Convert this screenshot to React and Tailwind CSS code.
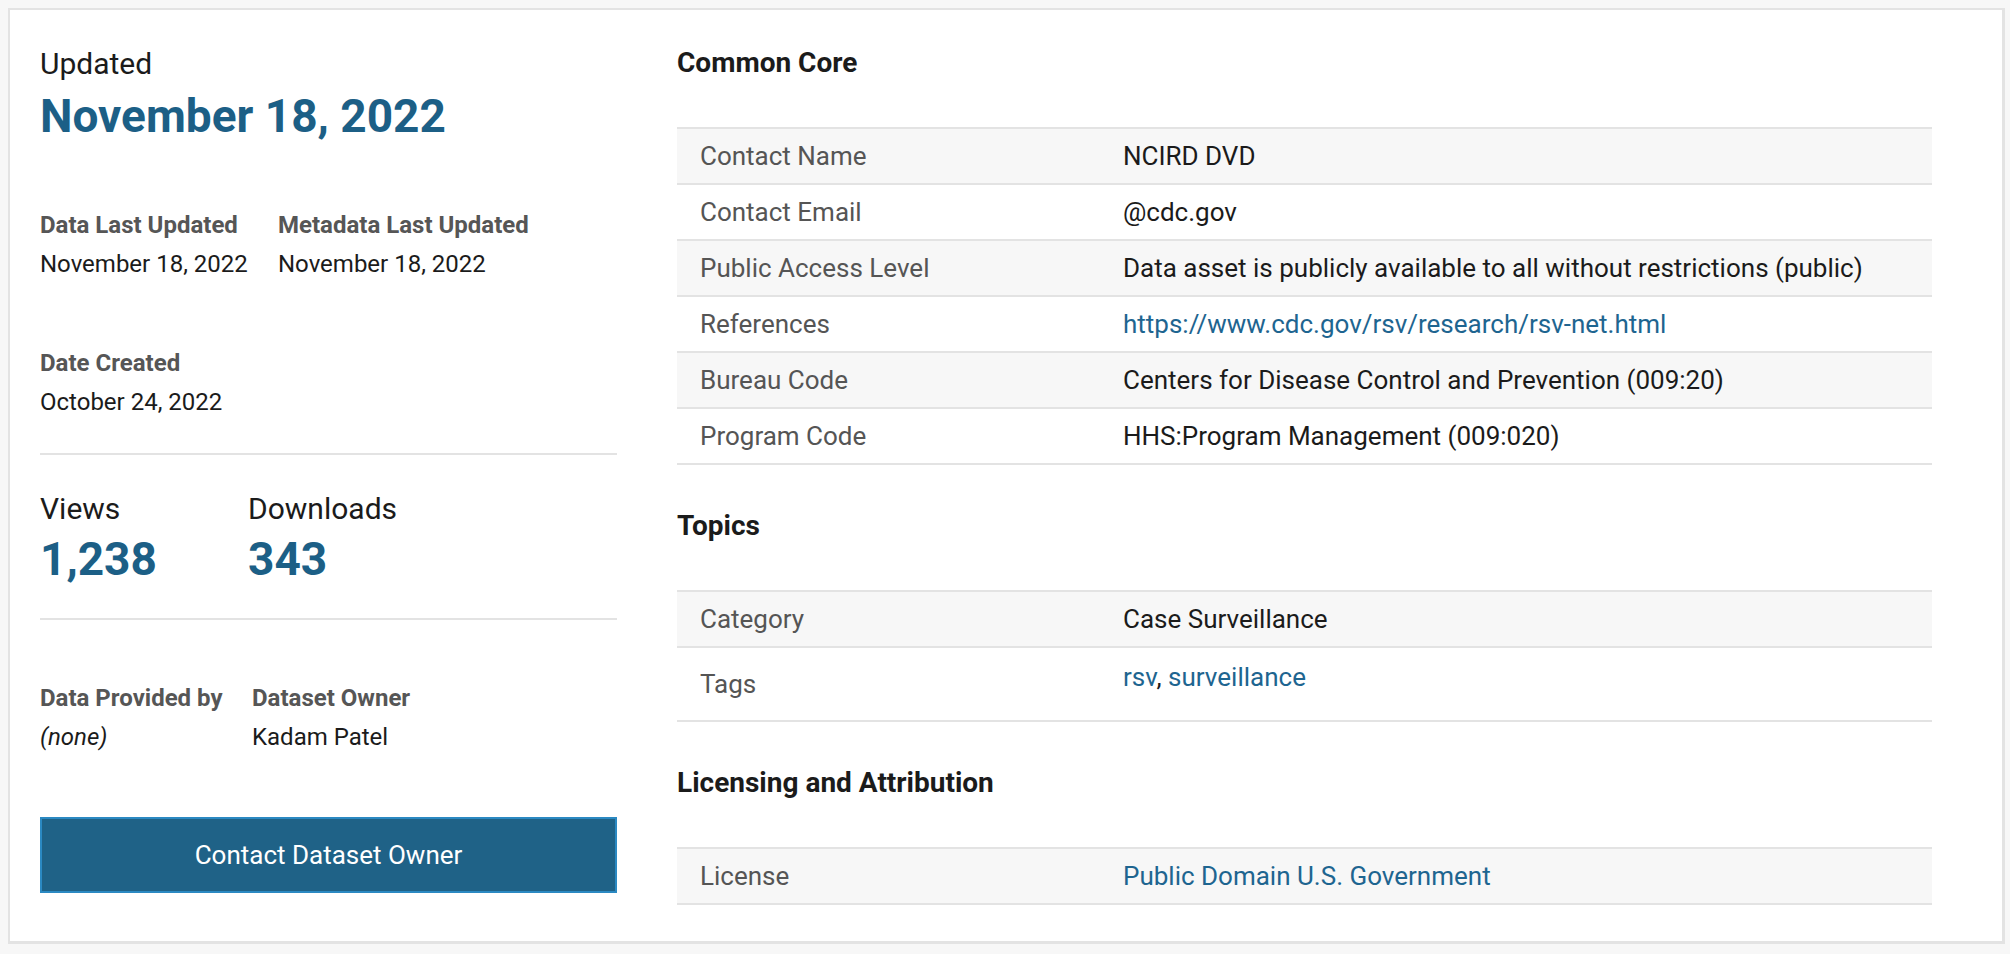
import React from "react";

const blue = "text-[#1c5f86]";

const commonCore = [
  { label: "Contact Name", value: "NCIRD DVD" },
  { label: "Contact Email", value: "@cdc.gov" },
  {
    label: "Public Access Level",
    value: "Data asset is publicly available to all without restrictions (public)",
  },
  {
    label: "References",
    value: "https://www.cdc.gov/rsv/research/rsv-net.html",
    link: true,
  },
  { label: "Bureau Code", value: "Centers for Disease Control and Prevention (009:20)" },
  { label: "Program Code", value: "HHS:Program Management (009:020)" },
];

const Row = ({ label, children, striped, tall }) => (
  <div
    className={`flex border-b-2 border-[#e3e3e3] ${striped ? "bg-[#f7f7f7]" : "bg-white"} ${
      tall ? "items-start" : "items-center h-[56px]"
    }`}
  >
    <div
      className={`w-[446px] shrink-0 pl-[23px] text-[#555555] leading-[36px] ${
        tall ? "self-center" : ""
      }`}
    >
      {label}
    </div>
    <div className={`text-[#1b1b1b] leading-[36px] ${tall ? "pt-[11px] pb-[25px]" : ""}`}>
      {children}
    </div>
  </div>
);

const Section = ({ title, first, children }) => (
  <div className={first ? "" : "mt-[44px]"}>
    <h2 className="text-[28px] leading-[34px] font-bold text-[#1b1b1b]">{title}</h2>
    <div className="mt-[47px] border-t-2 border-[#e3e3e3] text-[26px]">{children}</div>
  </div>
);

const Field = ({ label, value, width, italic }) => (
  <div className={width}>
    <div className="text-[24px] leading-[36px] font-bold text-[#565656]">{label}</div>
    <div className={`mt-[3px] text-[24px] leading-[36px] text-[#1b1b1b] ${italic ? "italic" : ""}`}>
      {value}
    </div>
  </div>
);

export default function App() {
  return (
    <div className="min-h-screen bg-[#f7f7f7] pt-[8px] pl-[8px] font-['Roboto',sans-serif]">
      <div className="w-[1997px] bg-white border-l-2 border-t-2 border-r-[3px] border-b-[3px] border-[#e3e3e3]">
        <div className="flex items-start pl-[30px] pt-[36px] pb-[36px]">
          {/* left column */}
          <div className="w-[577px] shrink-0">
            <div className="text-[30px] leading-[36px] text-[#1b1b1b]">Updated</div>
            <div className={`mt-[7px] text-[46px] leading-[55px] font-bold ${blue}`}>
              November 18, 2022
            </div>

            <div className="mt-[63px] flex">
              <Field label="Data Last Updated" value="November 18, 2022" width="w-[238px]" />
              <Field label="Metadata Last Updated" value="November 18, 2022" />
            </div>

            <div className="mt-[63px]">
              <Field label="Date Created" value="October 24, 2022" />
            </div>

            <div className="mt-[33px] h-[2px] bg-[#e3e3e3]" />

            <div className="mt-[36px] flex">
              <div className="w-[208px]">
                <div className="text-[30px] leading-[36px] text-[#1b1b1b]">Views</div>
                <div className={`mt-[5px] text-[46px] leading-[55px] font-bold ${blue}`}>1,238</div>
              </div>
              <div>
                <div className="text-[30px] leading-[36px] text-[#1b1b1b]">Downloads</div>
                <div className={`mt-[5px] text-[46px] leading-[55px] font-bold ${blue}`}>343</div>
              </div>
            </div>

            <div className="mt-[31px] h-[2px] bg-[#e3e3e3]" />

            <div className="mt-[60px] flex">
              <Field label="Data Provided by" value="(none)" width="w-[212px]" italic />
              <Field label="Dataset Owner" value="Kadam Patel" />
            </div>

            <button className="mt-[62px] w-full h-[76px] bg-[#1f6287] border-2 border-[#2b89c2] text-white text-[26px] leading-[36px]">
              Contact Dataset Owner
            </button>
          </div>

          {/* right column */}
          <div className="ml-[60px] w-[1255px] shrink-0">
            <Section title="Common Core" first>
              {commonCore.map((r, i) => (
                <Row key={r.label} label={r.label} striped={i % 2 === 0}>
                  {r.link ? <a className="text-[#1e6590]">{r.value}</a> : r.value}
                </Row>
              ))}
            </Section>

            <Section title="Topics">
              <Row label="Category" striped>
                Case Surveillance
              </Row>
              <Row label="Tags" tall>
                <a className="text-[#1e6590]">rsv</a>,{" "}
                <a className="text-[#1e6590]">surveillance</a>
              </Row>
            </Section>

            <Section title="Licensing and Attribution">
              <Row label="License" striped>
                <a className="text-[#1e6590]">Public Domain U.S. Government</a>
              </Row>
            </Section>
          </div>
        </div>
      </div>
    </div>
  );
}
